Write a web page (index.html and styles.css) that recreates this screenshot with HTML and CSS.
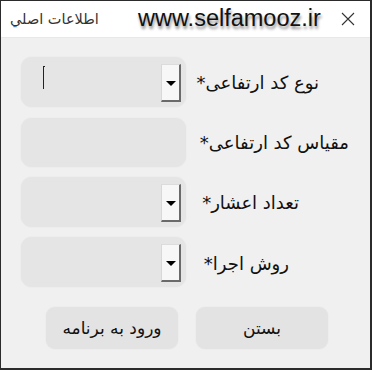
FILE: index.html
```html
<!DOCTYPE html>
<html>
<head>
<meta charset="utf-8">
<link rel="stylesheet" href="styles.css">
</head>
<body>
<div class="window">
  <div class="titlebar">
    <span class="title">اطلاعات اصلي</span>
    <span class="watermark">www.selfamooz.ir</span>
    <svg class="close" width="14" height="14" viewBox="0 0 14 14"><path d="M1 1 L13 13 M13 1 L1 13" stroke="#333" stroke-width="1.1" fill="none"/></svg>
  </div>
  <div class="form">
    <div class="row">
      <div class="field">
        <span class="caret"></span>
        <span class="drop"><span class="tri"></span></span>
      </div>
      <div class="label l1">نوع کد ارتفاعی*</div>
    </div>
    <div class="row">
      <div class="field text"></div>
      <div class="label l2">مقياس کد ارتفاعی*</div>
    </div>
    <div class="row">
      <div class="field">
        <span class="drop"><span class="tri"></span></span>
      </div>
      <div class="label l3">تعداد اعشار*</div>
    </div>
    <div class="row">
      <div class="field">
        <span class="drop"><span class="tri"></span></span>
      </div>
      <div class="label l4">روش اجرا*</div>
    </div>
    <div class="buttons">
      <div class="btn">ورود به برنامه</div>
      <div class="btn">بستن</div>
    </div>
  </div>
</div>
</body>
</html>
```
FILE: styles.css
```css
html, body {
  margin: 0;
  padding: 0;
  background: #f0f0f0;
}
.window {
  width: 372px;
  height: 370px;
  box-sizing: border-box;
  border-style: solid;
  border-color: #2b2b2b;
  border-width: 1px 2px 2px 1px;
  background: #f0f0f0;
  font-family: "DejaVu Sans", sans-serif;
  overflow: hidden;
}
.titlebar {
  height: 37px;
  background: #ffffff;
  display: flex;
  align-items: center;
  border-bottom: 1px solid #e8e8e8;
  box-sizing: border-box;
}
.title {
  font-size: 14.5px;
  color: #333;
  margin-left: 9px;
  width: 100px;
  direction: rtl;
  text-align: left;
  white-space: nowrap;
}
.watermark {
  font-family: "Liberation Sans", Arial, sans-serif;
  font-size: 23.5px;
  color: #111;
  margin-left: 28px;
  text-shadow: 1px 3px 3px rgba(0,0,0,0.45);
  margin-top: -2px;
}
.close {
  margin-left: auto;
  margin-right: 15px;
}
.form {
  padding: 19px 0 0 20px;
  display: flex;
  flex-direction: column;
  gap: 10px;
}
.row {
  display: flex;
  align-items: center;
  height: 50px;
}
.field {
  position: relative;
  width: 165px;
  height: 50px;
  box-sizing: border-box;
  background: #e5e5e5;
  border-radius: 11px;
  box-shadow: 0 0 2px rgba(0,0,0,0.06);
}
.field.text {
  height: 49px;
}
.caret {
  position: absolute;
  left: 22px;
  top: 9px;
  width: 2px;
  height: 23px;
  border-left: 1px solid #222;
  border-top: 1px solid #222;
  box-sizing: border-box;
}
.drop {
  position: absolute;
  left: 140px;
  top: 7px;
  width: 20px;
  height: 38px;
  box-sizing: border-box;
  background: #f7f7f7;
  border-left: 1px solid #d8d8d8;
  border-top: 1px solid #dcdcdc;
  border-right: 2px solid #6a6a6a;
  border-bottom: 2px solid #6a6a6a;
  display: flex;
  align-items: center;
  justify-content: center;
}
.tri {
  width: 0;
  height: 0;
  border-left: 5px solid transparent;
  border-right: 5px solid transparent;
  border-top: 5px solid #000;
  margin-top: 1px;
}
.label {
  flex: 1;
  direction: rtl;
  text-align: right;
  font-size: 18px;
  color: #111;
  white-space: nowrap;
}
.l1 { padding-right: 51px; }
.l2 { padding-right: 21px; }
.l3 { padding-right: 71px; }
.l4 { padding-right: 81px; margin-top: 2px; }
.buttons {
  display: flex;
  gap: 18px;
  padding-left: 25px;
  margin-top: 10px;
}
.btn {
  width: 132px;
  height: 42px;
  background: #e3e3e3;
  border-radius: 9px;
  display: flex;
  align-items: center;
  justify-content: center;
  direction: rtl;
  font-size: 17px;
  color: #111;
  box-shadow: 0 0 2px rgba(0,0,0,0.05);
}
```
